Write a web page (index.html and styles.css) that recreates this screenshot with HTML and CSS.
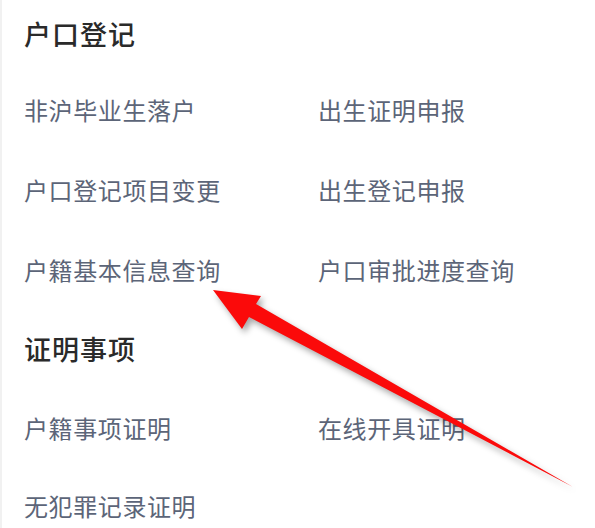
FILE: index.html
```html
<!DOCTYPE html>
<html lang="zh-CN">
<head>
<meta charset="utf-8">
<link rel="stylesheet" href="styles.css">
</head>
<body>
<div class="page">
  <section class="group">
    <h2 class="title t1">户口登记</h2>
    <div class="grid">
      <div class="item">非沪毕业生落户</div>
      <div class="item">出生证明申报</div>
      <div class="item">户口登记项目变更</div>
      <div class="item">出生登记申报</div>
      <div class="item">户籍基本信息查询</div>
      <div class="item">户口审批进度查询</div>
    </div>
  </section>
  <section class="group">
    <h2 class="title t2">证明事项</h2>
    <div class="grid grid-tight">
      <div class="item">户籍事项证明</div>
      <div class="item">在线开具证明</div>
      <div class="item">无犯罪记录证明</div>
    </div>
  </section>
  <svg class="arrow" width="595" height="528" viewBox="0 0 595 528">
    <polygon points="213,290 261,296 256,304 573,487 249,317 242,329" fill="#fb0a0a"/>
  </svg>
</div>
</body>
</html>
```
FILE: styles.css
```css
html, body {
  margin: 0;
  padding: 0;
  background: #ffffff;
}
.page {
  position: relative;
  width: 595px;
  height: 528px;
  overflow: hidden;
  box-sizing: border-box;
  padding-left: 22px;
  border-left: 2px solid #f1f1f1;
  font-family: "Noto Sans CJK SC", "Noto Sans", sans-serif;
}
.title {
  margin: 0;
  font-size: 27px;
  font-weight: 500;
  color: #2a2a2a;
  letter-spacing: 1px;
}
.t1 {
  height: 70px;
  line-height: 68px;
}
.t2 {
  height: 79px;
  line-height: 77px;
}
.grid {
  display: grid;
  grid-template-columns: 294px 1fr;
  grid-auto-rows: 80px;
}
.grid-tight {
  grid-auto-rows: 78px;
}
.item {
  font-size: 24px;
  line-height: 80px;
  color: #5c6578;
  letter-spacing: 0.6px;
  white-space: nowrap;
}
.grid-tight .item {
  line-height: 78px;
}
.arrow {
  position: absolute;
  left: -2px;
  top: 0;
  filter: drop-shadow(3px 4px 3px rgba(0, 0, 0, 0.35));
}
```
